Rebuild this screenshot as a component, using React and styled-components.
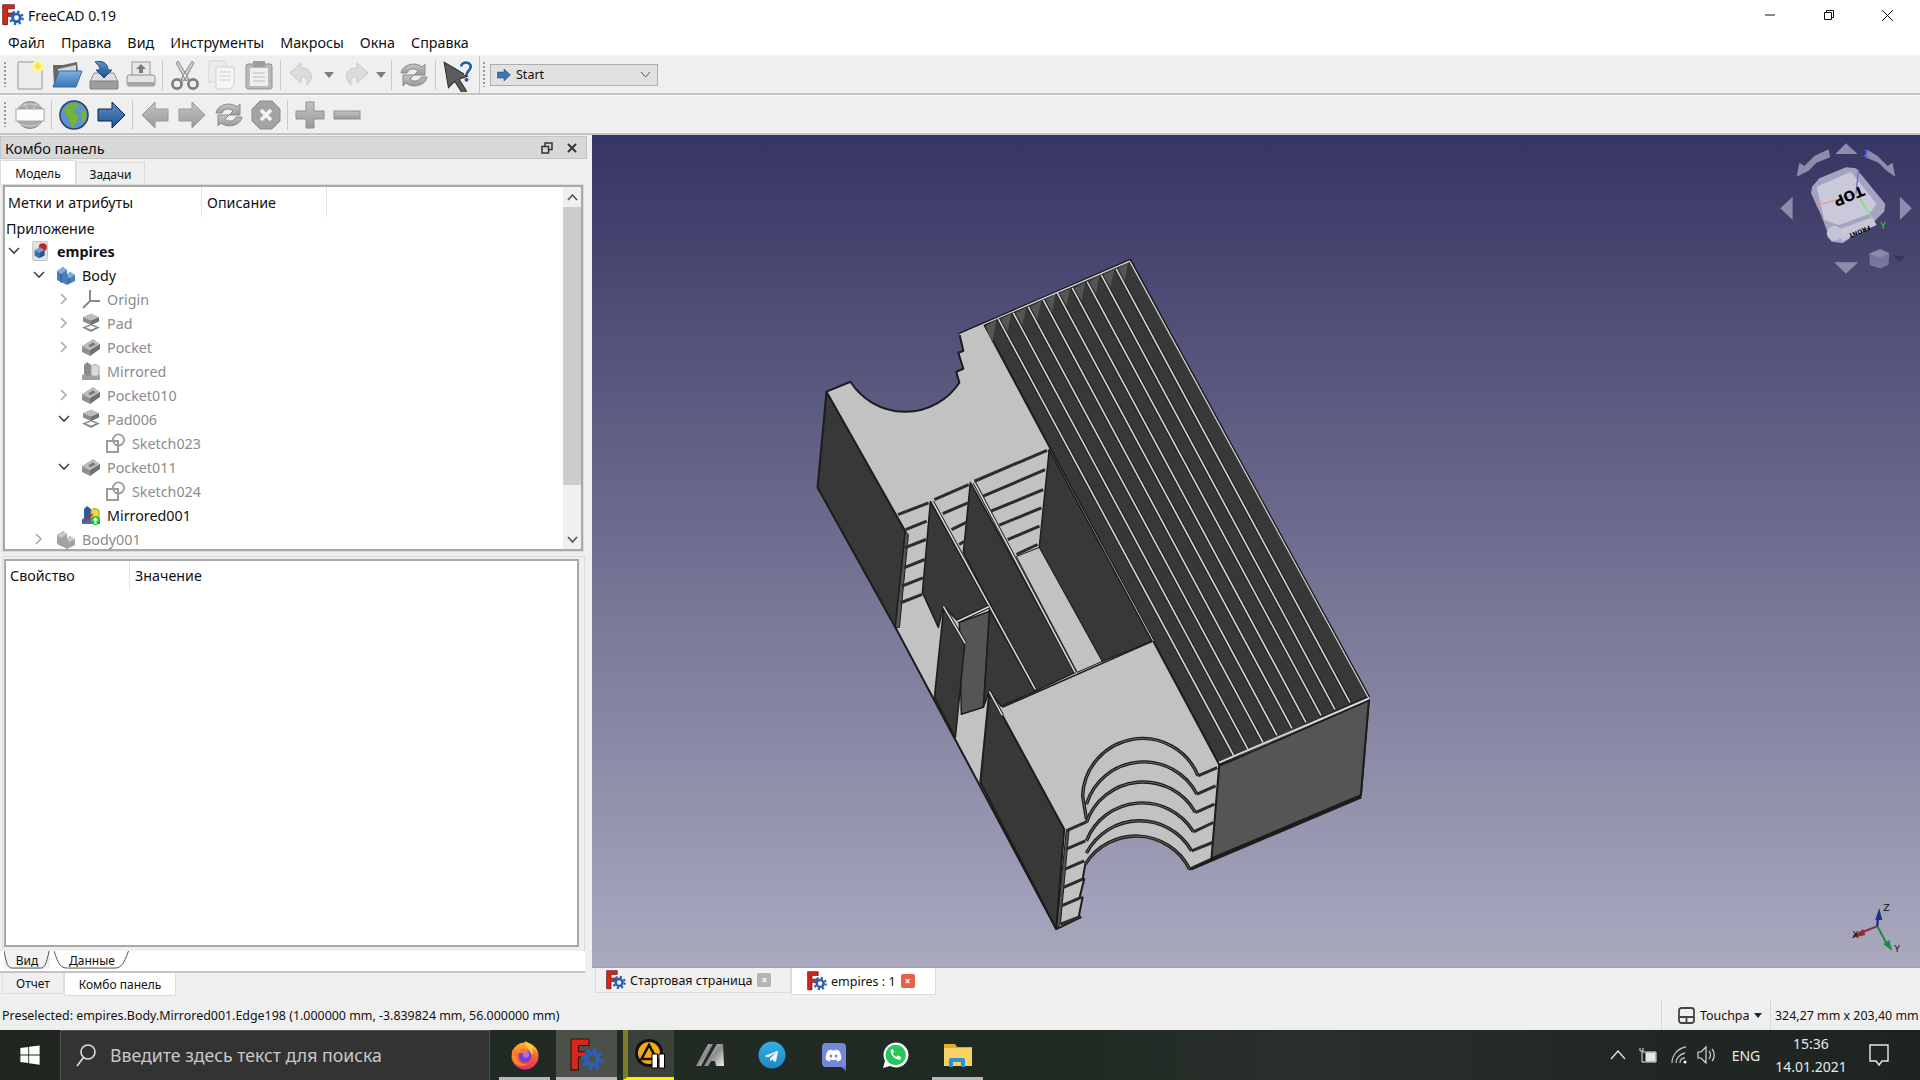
import React from 'react';
import styled, { createGlobalStyle } from 'styled-components';
import { FaWindows, FaDiscord, FaTelegramPlane } from 'react-icons/fa';

const FONT = '"Noto Sans", "Open Sans", sans-serif';

const Global = createGlobalStyle`
  html, body { margin: 0; padding: 0; background: #efefef; overflow: hidden; }
  * { box-sizing: border-box; }
`;

const Page = styled.div`
  width: 1920px;
  height: 1080px;
  display: flex;
  flex-direction: column;
  font-family: ${FONT};
  color: #111;
  background: #efefef;
`;

// title + menu
const TitleBar = styled.div`
  height: 30px;
  background: #fff;
  display: flex;
  align-items: center;
  padding-left: 2px;
  font-size: 14px;
`;
const TitleText = styled.span`
  margin-left: 4px;
`;
const WinButtons = styled.div`
  margin-left: auto;
  display: flex;
  padding-right: 3px;
`;
const WinButton = styled.div`
  width: 59px;
  height: 30px;
  display: flex;
  align-items: center;
  justify-content: center;
`;
const MenuBar = styled.div`
  height: 25px;
  background: #fff;
  display: flex;
  align-items: center;
  gap: 16px;
  padding-left: 8px;
  font-size: 14.3px;
`;

// toolbars
const Toolbar = styled.div`
  height: 40px;
  display: flex;
  align-items: center;
  padding-left: 11px;
  position: relative;
  background: #efefef;
  border-top: 1px solid #f8f8f8;
  border-bottom: 2px solid #c4c4c4;
`;
const Grip = styled.div`
  position: absolute;
  left: ${p => p.$left}px;
  top: 6px;
  bottom: 6px;
  width: 2px;
  background: repeating-linear-gradient(to bottom, #9a9a9a 0 2px, transparent 2px 4px);
`;
const ToolbarEdge = styled.div`
  position: absolute;
  left: 479px;
  top: 0;
  bottom: 0;
  width: 1px;
  background: #c4c4c4;
`;
const ToolButton = styled.div`
  width: ${p => p.$w || 37}px;
  height: 36px;
  display: flex;
  align-items: center;
  justify-content: center;
  flex: none;
`;
const ToolSep = styled.div`
  width: 1px;
  height: 30px;
  margin: 0 3px;
  background: #c9c9c9;
  flex: none;
`;
const Workbench = styled.div`
  width: 168px;
  height: 22px;
  margin-left: 14px;
  background: #e1e1e1;
  border: 1px solid #adadad;
  display: flex;
  align-items: center;
  font-size: 12.5px;
  padding: 0 6px 0 5px;
  gap: 4px;
`;
const ComboArrow = styled.svg`
  margin-left: auto;
`;

// main area
const Main = styled.div`
  height: 865px;
  display: flex;
`;
const LeftColumn = styled.div`
  width: 592px;
  flex: none;
  display: flex;
  flex-direction: column;
`;
const DockTitle = styled.div`
  height: 23px;
  width: 587px;
  margin-top: 1px;
  background: #d8d8d8;
  border: 1px solid #c4c4c4;
  display: flex;
  align-items: center;
  padding: 0 8px 0 4px;
  font-size: 14.5px;
`;
const DockButtons = styled.div`
  margin-left: auto;
  display: flex;
  gap: 13px;
  align-items: center;
`;
const TabRow = styled.div`
  display: flex;
  align-items: ${p => (p.$top ? 'flex-start' : 'flex-end')};
  height: 26px;
  padding-left: ${p => p.$left || 0}px;
`;
const Tab = styled.div`
  height: ${p => p.$h}px;
  width: ${p => p.$w}px;
  display: flex;
  align-items: center;
  justify-content: center;
  font-size: 12px;
  background: ${p => (p.$active ? '#fff' : '#f0f0f0')};
  border: 1px solid #dcdcdc;
  border-bottom: ${p => (p.$flat ? 'none' : '1px solid #dcdcdc')};
  border-top: ${p => (p.$flat ? '1px solid #dcdcdc' : 'none')};
`;
const TreeBox = styled.div`
  width: 580px;
  height: 366px;
  margin-left: 3px;
  border: 2px solid #a8a8a8;
  background: #fff;
  display: flex;
  outline: 1px solid #dcdcdc;
`;
const TreeList = styled.div`
  flex: 1;
  overflow: hidden;
  font-size: 14.3px;
  margin-left: -1px;
`;
const HeaderRow = styled.div`
  height: ${p => p.$h}px;
  display: flex;
  font-size: 14.3px;
`;
const HeaderCell = styled.div`
  width: ${p => p.$w}px;
  height: 100%;
  padding-left: ${p => p.$pad}px;
  display: flex;
  align-items: center;
  border-right: ${p => (p.$last ? 'none' : '1px solid #e4e4e4')};
`;
const TreeRow = styled.div`
  height: 24px;
  display: flex;
  align-items: center;
  padding-left: ${p => p.$depth * 25}px;
  color: ${p => (p.$muted ? '#8c8c8c' : '#111')};
  font-weight: ${p => (p.$bold ? 700 : 400)};
`;
const RootRow = styled.div`
  height: 22px;
  display: flex;
  align-items: center;
  padding-left: 2px;
`;
const Chevron = styled.svg`
  width: 20px;
  height: 20px;
  flex: none;
`;
const RowIcon = styled.svg`
  width: 20px;
  height: 20px;
  flex: none;
  margin: 0 6px 0 7px;
`;
const Scrollbar = styled.div`
  width: 18px;
  flex: none;
  background: #f0f0f0;
  display: flex;
  flex-direction: column;
`;
const ScrollEnd = styled.div`
  height: 20px;
  display: flex;
  align-items: center;
  justify-content: center;
  flex: none;
`;
const ScrollTrack = styled.div`
  flex: 1;
`;
const ScrollThumb = styled.div`
  height: 278px;
  background: #cdcdcd;
  flex: none;
`;
const PropsFrame = styled.div`
  width: 583px;
  height: 395px;
  margin: 5px 0 0 2px;
  padding: 2px 2px;
  border: 1px solid #dcdcdc;
  border-bottom: none;
`;
const PropsBox = styled.div`
  height: 388px;
  width: 575px;
  background: #fff;
  border: 2px solid #a8a8a8;
  margin-left: -1px;
`;
const DataTabs = styled.div`
  width: 585px;
  height: 22px;
  background: #fff;
  border-bottom: 2px solid #c4c4c4;
  display: flex;
  padding-left: 4px;
  font-size: 12px;
`;
const SlantTab = styled.div`
  position: relative;
  height: 18px;
  width: ${p => p.$w}px;
  margin-right: 4px;
  display: flex;
  align-items: center;
  justify-content: center;
  background: ${p => (p.$active ? '#fff' : '#f2f2f2')};
`;
const SlantOutline = styled.svg`
  position: absolute;
  inset: 0;
  width: 100%;
  height: 100%;
`;
const RightColumn = styled.div`
  flex: 1;
  display: flex;
  flex-direction: column;
`;
const Viewport = styled.div`
  height: 833px;
  border-bottom: 1px solid #a5a5a5;
  background: linear-gradient(to bottom, #363563 0%, #a9a9bf 100%);
`;
const Scene = styled.svg`
  width: 100%;
  height: 100%;
  display: block;
`;
const DocTabs = styled.div`
  display: flex;
  padding-left: 3px;
  font-size: 12.5px;
`;
const DocTab = styled.div`
  height: ${p => (p.$active ? 27 : 25)}px;
  width: ${p => p.$w}px;
  display: flex;
  align-items: center;
  gap: 4px;
  padding-left: ${p => p.$pad}px;
  background: ${p => (p.$active ? '#fff' : '#f0f0f0')};
  border: 1px solid #dcdcdc;
  border-top: none;
`;
const CloseBadge = styled.span`
  width: 14px;
  height: 14px;
  margin-left: 1px;
  border-radius: 2px;
  background: ${p => (p.$active ? '#e8604a' : '#b4b4b4')};
  color: #fff;
  font-size: 10px;
  font-weight: 700;
  display: flex;
  align-items: center;
  justify-content: center;
  line-height: 1;
`;

// status
const StatusBar = styled.div`
  height: 30px;
  display: flex;
  align-items: center;
  padding-left: 2px;
  font-size: 12.43px;
`;
const StatusRight = styled.div`
  margin-left: auto;
  display: flex;
  align-items: center;
  height: 30px;
`;
const StatusCell = styled.div`
  width: ${p => p.$w}px;
  height: 100%;
  display: flex;
  align-items: center;
  padding-left: ${p => p.$pad}px;
  gap: 5px;
  border-left: 1px solid #d8d8d8;
  white-space: nowrap;
`;

// windows taskbar
const Taskbar = styled.div`
  height: 50px;
  background: linear-gradient(90deg, #20261f 0%, #222b23 22%, #1f2a22 55%, #2a2f2c 68%, #212823 85%, #1e2421 100%);
  display: flex;
  align-items: center;
  color: #e8e8e8;
`;
const StartButton = styled.div`
  width: 60px;
  height: 50px;
  display: flex;
  align-items: center;
  justify-content: center;
  color: #fff;
  font-size: 22px;
`;
const SearchBox = styled.div`
  width: 430px;
  height: 50px;
  background: #333;
  border: 1px solid #555;
  border-bottom: none;
  display: flex;
  align-items: center;
  gap: 13px;
  padding: 0 0 2px 14px;
  color: #c8c8c8;
  font-size: 17.7px;
  margin-right: 4px;
`;
const TaskIcon = styled.div`
  width: ${p => p.$w || 51}px;
  height: 50px;
  margin-left: ${p => p.$ml || 0}px;
  display: flex;
  align-items: center;
  justify-content: center;
  background: ${p => p.$bg || 'transparent'};
  border-bottom: 3px solid ${p => p.$line || 'transparent'};
  border-left: ${p => (p.$edge ? `5px solid ${p.$edge}` : 'none')};
  padding-top: 3px;
  flex: none;
`;
const Tray = styled.div`
  margin-left: auto;
  display: flex;
  align-items: center;
  height: 50px;
  font-size: 14px;
  padding-right: 18px;
`;
const TrayItem = styled.div`
  width: ${p => p.$w}px;
  display: flex;
  justify-content: center;
  align-items: center;
  padding-left: ${p => p.$pad || 0}px;
`;
const Clock = styled.div`
  width: 90px;
  text-align: center;
  line-height: 23px;
  font-size: 14px;
`;
const HiddenDefs = styled.svg`
  position: absolute;
  width: 0;
  height: 0;
`;

// shared gradients for the toolbar and taskbar pictures
const Gradients = () => (
  <HiddenDefs>
    <defs>
      <linearGradient id="gGray" x1="0" y1="0" x2="0" y2="1">
        <stop offset="0" stopColor="#c4c4c4" />
        <stop offset="1" stopColor="#999" />
      </linearGradient>
      <linearGradient id="gBlue" x1="0" y1="0" x2="0" y2="1">
        <stop offset="0" stopColor="#5b93cf" />
        <stop offset="1" stopColor="#1f4f88" />
      </linearGradient>
      <linearGradient id="gFolder" x1="0" y1="0" x2="0" y2="1">
        <stop offset="0" stopColor="#7fb0e2" />
        <stop offset="1" stopColor="#3b74b6" />
      </linearGradient>
      <linearGradient id="gFox" x1="0" y1="0" x2="0" y2="1">
        <stop offset="0" stopColor="#ffb52e" />
        <stop offset="0.55" stopColor="#f5602f" />
        <stop offset="1" stopColor="#e02f72" />
      </linearGradient>
      <linearGradient id="gMetal" x1="0" y1="0" x2="1" y2="1">
        <stop offset="0" stopColor="#e8e8e8" />
        <stop offset="0.5" stopColor="#8a8a8a" />
        <stop offset="1" stopColor="#f2f2f2" />
      </linearGradient>
      <linearGradient id="gTele" x1="0" y1="0" x2="0" y2="1">
        <stop offset="0" stopColor="#37aee2" />
        <stop offset="1" stopColor="#1e88c7" />
      </linearGradient>
    </defs>
  </HiddenDefs>
);

const FreeCadLogo = ({ size = 20 }) => (
  <svg width={size} height={size} viewBox="0 0 32 32">
    <path d="M1 1h17v6H8v6h8v5H8v12H1z" fill="#d8261c" stroke="#3d0c0a" strokeWidth="1" />
    <circle cx="21" cy="20" r="5.5" fill="none" stroke="#2c5fb4" strokeWidth="4" />
    <circle cx="21" cy="20" r="9" fill="none" stroke="#2c5fb4" strokeWidth="3.4" strokeDasharray="3.5 3.57" />
  </svg>
);

// toolbar pictures, all in a 32x32 box
const Tool = ({ children, size = 32 }) => (
  <svg width={size} height={size} viewBox="0 0 32 32">{children}</svg>
);

const refreshIcon = (
  <Tool>
    <path d="M3 14C4 6 17 2 24 8l3-3v11H16l4-4c-3-3-9-3-11 2z" fill="url(#gGray)" stroke="#8a8a8a" />
    <path d="M29 18c-1 8-14 12-21 6l-3 3V16h11l-4 4c3 3 9 3 11-2z" fill="url(#gGray)" stroke="#8a8a8a" />
  </Tool>
);

const toolIcons = {
  newDoc: (
    <Tool>
      <rect x="4" y="3" width="24" height="27" rx="1" fill="#ececec" stroke="#b4b4b4" strokeWidth="1.5" />
      <circle cx="24" cy="7" r="6" fill="#fbf6a0" />
      <circle cx="24" cy="7" r="3" fill="#f7e93f" />
    </Tool>
  ),
  open: (
    <Tool>
      <path d="M3 26 2 6l10 0 14-3 1 9H9z" fill="#666" />
      <path d="M7 10l18-4v6H7z" fill="#d6d6d6" />
      <path d="M2 28 8 12h23l-6 16z" fill="url(#gFolder)" stroke="#3a6aa4" />
    </Tool>
  ),
  save: (
    <Tool>
      <path d="M6 14h20l4 9H2z" fill="#dedede" stroke="#8f8f8f" />
      <rect x="2" y="22" width="28" height="8" rx="1" fill="#9d9d9d" stroke="#7f7f7f" />
      <path d="M7 3c7-2 13 1 13 8h4l-8 8-8-8h4c0-3-2-6-5-8z" fill="url(#gBlue)" stroke="#224e80" />
    </Tool>
  ),
  saveAs: (
    <Tool>
      <rect x="7" y="3" width="18" height="14" fill="#e8e8e8" stroke="#9a9a9a" />
      <path d="M16 5l5 5h-3v4h-4v-4h-3z" fill="#7d7d7d" />
      <rect x="2" y="16" width="28" height="11" rx="2" fill="#e4e4e4" stroke="#8f8f8f" />
      <rect x="3" y="23" width="26" height="4" fill="#a5a5a5" />
    </Tool>
  ),
  cut: (
    <Tool>
      <path d="M9 2l11 18-3 2L7 4zM23 2 12 20l3 2L25 4z" fill="#cfcfcf" stroke="#8a8a8a" />
      <circle cx="8" cy="25" r="4.6" fill="none" stroke="#808080" strokeWidth="2.8" />
      <circle cx="24" cy="25" r="4.6" fill="none" stroke="#808080" strokeWidth="2.8" />
    </Tool>
  ),
  copy: (
    <Tool>
      <rect x="3" y="2" width="17" height="21" fill="#ececec" stroke="#d6d6d6" />
      <path d="M10 8h18v18l-4 4H10z" fill="#f6f6f6" stroke="#cfcfcf" />
      <path d="M13 13h12M13 17h12M13 21h12" stroke="#cdcdcd" />
    </Tool>
  ),
  paste: (
    <Tool>
      <rect x="3" y="5" width="26" height="25" rx="2" fill="#b9b9b9" stroke="#929292" />
      <rect x="7" y="9" width="18" height="18" fill="#efefef" />
      <path d="M10 2h12v6H10z" fill="#9d9d9d" />
      <path d="M10 14h12M10 18h12M10 22h12" stroke="#bdbdbd" />
    </Tool>
  ),
  undo: (
    <Tool>
      <path d="M14 4 3 14l11 10v-6c5-1 7 2 6 8 7-6 6-17-6-17z" fill="#dcdcdc" stroke="#c6c6c6" />
    </Tool>
  ),
  redo: (
    <Tool>
      <path d="M18 4l11 10-11 10v-6c-5-1-7 2-6 8-7-6-6-17 6-17z" fill="#dcdcdc" stroke="#c6c6c6" />
    </Tool>
  ),
  refresh: refreshIcon,
  whatsThis: (
    <Tool size={34}>
      <path d="M3 4 25 17l-8 3 7 11-4 2-7-11-6 6z" fill="#5c5c5c" stroke="#2d2d2d" />
      <path d="M19 8c0-5 9-5 9 0 0 4-4 4-4 8" fill="none" stroke="#fff" strokeWidth="4.4" />
      <path d="M19 8c0-5 9-5 9 0 0 4-4 4-4 8" fill="none" stroke="#2a5f9e" strokeWidth="2.6" />
      <circle cx="24" cy="20.5" r="1.9" fill="#2a5f9e" />
    </Tool>
  ),
  stopPage: (
    <Tool>
      <circle cx="16" cy="16" r="13.5" fill="#a9a9a9" stroke="#8a8a8a" />
      <path d="M4 8c7-4 17-4 24 0M10 4l3 6M22 4l-3 6M4 24c7 4 17 4 24 0" stroke="#d4d4d4" fill="none" />
      <rect x="2" y="10" width="28" height="12" fill="#fcfcfc" stroke="#a8a8a8" />
    </Tool>
  ),
  globe: (
    <Tool>
      <circle cx="16" cy="16" r="14" fill="#5d94d0" stroke="#2c3f63" strokeWidth="1.6" />
      <path d="M6 11c3-6 10-8 15-6l-2 4-4 1 1 4 5 2-2 6-4 7c-3-1-3-7-4-10-3-1-4-4-5-8z" fill="#74b52f" />
      <path d="M23 11l5 1c1 5 0 9-3 12l-2-7z" fill="#74b52f" />
    </Tool>
  ),
  blueArrow: (
    <Tool>
      <path d="M3 10h14V3l13 13-13 13v-7H3z" fill="url(#gBlue)" stroke="#12253e" />
    </Tool>
  ),
  backGray: (
    <Tool>
      <path d="M29 10H16V3L3 16l13 13v-7h13z" fill="url(#gGray)" stroke="#9a9a9a" />
    </Tool>
  ),
  forwardGray: (
    <Tool>
      <path d="M3 10h13V3l13 13-13 13v-7H3z" fill="url(#gGray)" stroke="#9a9a9a" />
    </Tool>
  ),
  stopGray: (
    <Tool>
      <path d="M10 2h12l8 8v12l-8 8H10l-8-8V10z" fill="#a3a3a3" stroke="#8d8d8d" />
      <path d="M11 11l10 10M21 11 11 21" stroke="#f4f4f4" strokeWidth="3.6" />
    </Tool>
  ),
  plus: (
    <Tool>
      <path d="M12 3h8v9h10v8H20v9h-8v-9H2v-8h10z" fill="url(#gGray)" stroke="#8f8f8f" />
    </Tool>
  ),
  minus: (
    <Tool>
      <rect x="3" y="12" width="26" height="8" fill="url(#gGray)" stroke="#8f8f8f" />
    </Tool>
  ),
};

const DropArrow = () => (
  <svg width="10" height="6" viewBox="0 0 10 6"><path d="M0 0h10L5 6z" fill="#7d7d7d" /></svg>
);

const ChevronIcon = ({ open, muted }) => (
  <Chevron viewBox="0 0 20 20">
    <path
      d={open ? 'M5 7l5 5 5-5' : 'M7 5l5 5-5 5'}
      fill="none"
      stroke={muted ? '#a8a8a8' : '#444'}
      strokeWidth="1.6"
    />
  </Chevron>
);

const padShape = (
  <>
    <path d="M1 14.5 10 11l9 3.5L10 19z" fill="#8a8a8a" />
    <path d="M5 14.5 10 12.5l5 2-5 2z" fill="#fff" />
    <path d="M2 4l8-3.5L18 4l-8 3.5z" fill="#bdbdbd" />
    <path d="M2 4l8 3.5V12L2 8.5z" fill="#8a8a8a" />
    <path d="M10 7.5 18 4v4.5L10 12z" fill="#6f6f6f" />
  </>
);

const pocketShape = (
  <>
    <path d="M1 9 12 2l7 5-10 6z" fill="#bcbcbc" />
    <path d="M7 8.5 12 5.5l2.6 1.8-5 3z" fill="#777" />
    <path d="M1 9l8 4v6l-8-4z" fill="#8f8f8f" />
    <path d="M9 13l10-6v5l-10 7z" fill="#707070" />
  </>
);

const treeIcon = {
  doc: (
    <RowIcon viewBox="0 0 20 22">
      <rect x="1" y="0.5" width="16" height="21" rx="1" fill="#e2e2e2" stroke="#bdbdbd" />
      <circle cx="12" cy="7" r="4.4" fill="#d11f1f" />
      <path d="M3 10l6-3 5 3-6 3z" fill="#6f9ed6" />
      <path d="M3 10l5 3v6l-5-3z" fill="#3d6cab" />
      <path d="M8 13l6-3v6l-6 3z" fill="#28548e" />
    </RowIcon>
  ),
  body: (
    <RowIcon viewBox="0 0 20 20">
      <path d="M1 6l6-4 4 3v4l3-2 5 3v6l-8 4-10-5z" fill="#4a7dbb" />
      <path d="M1 6l6-4 4 3-6 4zM11 9l3-2 5 3-6 3.4z" fill="#86abda" />
      <path d="M5 9v9M13 13.5V18" stroke="#2b5286" />
    </RowIcon>
  ),
  bodyGray: (
    <RowIcon viewBox="0 0 20 20">
      <path d="M1 6l6-4 4 3v4l3-2 5 3v6l-8 4-10-5z" fill="#a2a2a2" />
      <path d="M1 6l6-4 4 3-6 4zM11 9l3-2 5 3-6 3.4z" fill="#c8c8c8" />
    </RowIcon>
  ),
  origin: (
    <RowIcon viewBox="0 0 20 20">
      <path d="M9 1v11M9 12h10M9 12l-7 7" fill="none" stroke="#8a8a8a" strokeWidth="2" />
    </RowIcon>
  ),
  pad: <RowIcon viewBox="0 0 20 20">{padShape}</RowIcon>,
  pocket: <RowIcon viewBox="0 0 20 20">{pocketShape}</RowIcon>,
  mirrored: (
    <RowIcon viewBox="0 0 20 20">
      <path d="M1 14l8-3 10 3v5H1z" fill="#a0a0a0" />
      <path d="M3 4l3-3 4 3v9l-3 3-4-3z" fill="#8a8a8a" />
      <path d="M10 6c0-3 8-3 8 0v7c0 3-8 3-8 0z" fill="#dadada" stroke="#a2a2a2" />
    </RowIcon>
  ),
  mirroredActive: (
    <RowIcon viewBox="0 0 20 20">
      <path d="M1 14l8-3 10 3v5H1z" fill="#3f72b0" />
      <path d="M3 4l3-3 4 3v9l-3 3-4-3z" fill="#2d5c99" />
      <path d="M10 6c0-3 8-3 8 0v7c0 3-8 3-8 0z" fill="#ecd944" stroke="#a7942b" />
      <path d="M2 17l10-8" stroke="#cf2121" strokeWidth="1.6" />
      <circle cx="14.5" cy="15.5" r="4.5" fill="#17c424" />
      <path d="M14.5 12l3 3.4h-2V19h-2v-3.6h-2z" fill="#fff" />
    </RowIcon>
  ),
  sketch: (
    <RowIcon viewBox="0 0 20 20">
      <rect x="1" y="8" width="11" height="11" fill="none" stroke="#979797" strokeWidth="1.9" />
      <circle cx="12.5" cy="7" r="5.6" fill="none" stroke="#979797" strokeWidth="1.7" />
    </RowIcon>
  ),
};

const treeRows = [
  { label: 'empires', depth: 0, icon: 'doc', open: true, bold: true },
  { label: 'Body', depth: 1, icon: 'body', open: true },
  { label: 'Origin', depth: 2, icon: 'origin', closed: true, muted: true },
  { label: 'Pad', depth: 2, icon: 'pad', closed: true, muted: true },
  { label: 'Pocket', depth: 2, icon: 'pocket', closed: true, muted: true },
  { label: 'Mirrored', depth: 2, icon: 'mirrored', muted: true },
  { label: 'Pocket010', depth: 2, icon: 'pocket', closed: true, muted: true },
  { label: 'Pad006', depth: 2, icon: 'pad', open: true, muted: true },
  { label: 'Sketch023', depth: 3, icon: 'sketch', muted: true },
  { label: 'Pocket011', depth: 2, icon: 'pocket', open: true, muted: true },
  { label: 'Sketch024', depth: 3, icon: 'sketch', muted: true },
  { label: 'Mirrored001', depth: 2, icon: 'mirroredActive' },
  { label: 'Body001', depth: 1, icon: 'bodyGray', closed: true, muted: true },
];

// the zoomed crops were read off at these scales, convert to page coordinates
const a = (x, y) => [800 + x / 2.613, 240 + y / 3];
const b = (x, y) => [800 + x / 2.613, 500 + y / 3];
const n = (x, y) => [1760 + x / 3, 130 + y / 3];
const str = list => list.map(p => p.map(v => v.toFixed(1)).join(',')).join(' ');
const seg = (p, q) => ({ x1: p[0], y1: p[1], x2: q[0], y2: q[1] });

const EDGE = '#1c1c1c';
const LIGHT = '#c2c2c2';
const DARK = '#383838';
const MID = '#555';

const ribTops = [[984, 325], [998, 319], [1013, 313], [1028, 307], [1043, 300], [1057, 293], [1072, 288], [1087, 282], [1101, 275], [1116, 269], [1130, 260]];
const ribEnds = [[1219, 765], [1234, 757], [1248, 750], [1263, 743], [1277, 736], [1292, 729], [1306, 723], [1321, 716], [1335, 710], [1350, 703], [1369, 697]];

const stairLines = [
  [[255, 825], [335, 790]], [[275, 870], [330, 845]], [[272, 925], [328, 900]], [[270, 985], [325, 960]],
  [[265, 1040], [320, 1015]], [[262, 1090], [318, 1065]],
  [[350, 780], [440, 735]], [[372, 822], [438, 790]], [[395, 870], [435, 848]], [[415, 915], [428, 906]],
  [[455, 725], [645, 632]], [[478, 770], [640, 690]], [[498, 815], [635, 750]], [[520, 857], [630, 805]],
  [[542, 900], [625, 860]], [[565, 945], [620, 915]],
];

const frontSteps = [
  [[1040, 830], [1090, 805]], [[1037, 885], [1086, 860]], [[1033, 940], [1083, 915]], [[1028, 998], [1080, 970]],
  [[1023, 1055], [1078, 1030]], [[1018, 1110], [1075, 1080]],
  [[695, 995], [748, 968]], [[695, 1050], [745, 1025]], [[692, 1110], [742, 1085]], [[688, 1165], [738, 1140]],
  [[684, 1220], [734, 1195]], [[680, 1275], [733, 1252]],
];

// right end, left end of each stepped arc
const arcs = [
  [[1040, 830], [738, 890], [748, 960]],
  [[1037, 885], [748, 915]],
  [[1033, 940], [748, 970]],
  [[1028, 998], [748, 1025]],
  [[1023, 1055], [748, 1062]],
  [[1018, 1110], [745, 1095]],
];

const arcPath = ([r, e, tail]) =>
  `M${b(...r)} A60 60 0 0 0 ${b(...e)}${tail ? ` L${b(...tail)}` : ''}`;

const CadModel = () => (
  <g strokeLinejoin="round">
    {/* light top faces */}
    <path
      d={`M826,392 L850,382 A65 65 0 0 0 959,383
        L${str([[956, 372], [963, 369], [958, 353], [963, 351], [959, 334], [1130, 260], [1369, 701], [1361, 796], b(1018, 1110)])}
        A60 60 0 0 0 ${b(745, 1095)}
        L${str([b(738, 1140), b(742, 1140), b(730, 1195), b(738, 1195), b(728, 1252), b(733, 1255), [1056, 930], [895, 628]])} Z`}
      fill={LIGHT}
      stroke={EDGE}
      strokeWidth="2"
    />
    {/* left outer wall */}
    <polygon points="826,392 817,488 895,628 905,532" fill={DARK} stroke={EDGE} strokeWidth="2" />
    <polygon points="905,532 895,628 899,628 908,535" fill={MID} stroke={EDGE} strokeWidth="1" />

    {/* channels on the right */}
    <polygon points="984,325 1130,260 1369,697 1219,765" fill={DARK} stroke={EDGE} strokeWidth="2" />
    {ribTops.slice(0, 10).map((p, i) => {
      const t = ribTops[i + 1];
      return <polygon key={i} points={`${p[0] + 1},${p[1] + 1} ${t[0] - 2},${t[1] + 1} ${p[0] + 8},${p[1] + 18}`} fill={MID} />;
    })}
    {ribTops.slice(1, 10).map((p, i) => (
      <g key={i}>
        <line {...seg(p, ribEnds[i + 1])} stroke={EDGE} strokeWidth="3.6" />
        <line {...seg(p, ribEnds[i + 1])} stroke="#d6d6d6" strokeWidth="1.6" />
      </g>
    ))}
    <line {...seg([1130, 262], [1369, 699])} stroke="#d6d6d6" strokeWidth="1.2" />
    <line {...seg([959, 335], [1130, 261])} stroke="#d6d6d6" strokeWidth="1.2" />
    <line {...seg([1049, 450], [1153, 642])} stroke={EDGE} strokeWidth="3.5" />
    <line {...seg([1049, 450], [1153, 642])} stroke="#d6d6d6" strokeWidth="1.5" />

    {/* pocket walls */}
    <polygon points={str([[930, 502], [989, 608], [959, 623], [943, 607], [938, 628], [922, 593]])} fill={DARK} stroke={EDGE} strokeWidth="1.5" />
    <polygon points={str([[989, 610], [1035, 692], [1001, 707], [989, 692], [983, 708]])} fill={DARK} stroke={EDGE} strokeWidth="1.5" />
    <polygon points={str([[959, 623], [989, 612], [983, 708], [961, 715]])} fill={MID} stroke={EDGE} strokeWidth="1.5" />
    <polygon points={str([[970, 483], [1075, 673], [1035, 692], [963, 553]])} fill={DARK} stroke={EDGE} strokeWidth="1.5" />
    <polygon points={str([[1049, 450], [1152, 642], [1102, 662], [1039, 548]])} fill={DARK} stroke={EDGE} strokeWidth="1.5" />
    <polygon points={str([[1016, 557], [1039, 548], [1102, 662], [1077, 673]])} fill={LIGHT} stroke={EDGE} strokeWidth="1" />
    <polygon points={str([[943.5, 607], [964.6, 643], [955, 738], [934, 698]])} fill={DARK} stroke={EDGE} strokeWidth="1.5" />
    <polygon points={str([[989, 692], [1064, 830], [1056, 930], [980, 783]])} fill={DARK} stroke={EDGE} strokeWidth="2" />

    {/* light lips beside the walls */}
    {[[[932, 502], [1035, 690]], [[974, 483], [1075, 673]], [[943, 607], [965, 644]], [[989, 692], [1002, 716]], [[957, 622], [989, 607]]].map((l, i) => (
      <g key={i}>
        <line {...seg(l[0], l[1])} stroke={EDGE} strokeWidth="3.5" />
        <line {...seg(l[0], l[1])} stroke="#d8d8d8" strokeWidth="1.6" />
      </g>
    ))}
    <line {...seg([1002, 708], [1152, 642])} stroke={EDGE} strokeWidth="1.6" />

    {/* stairs inside the pockets */}
    {stairLines.map((l, i) => (
      <line key={i} {...seg(a(...l[0]), a(...l[1]))} stroke="#2c2c2c" strokeWidth="3" />
    ))}

    {/* front end */}
    <polygon points={str([b(695, 995), b(670, 1290), b(680, 1275), b(702, 995)])} fill={MID} stroke={EDGE} strokeWidth="1" />
    {frontSteps.map((l, i) => (
      <line key={i} {...seg(b(...l[0]), b(...l[1]))} stroke="#2c2c2c" strokeWidth="3" />
    ))}
    {arcs.map((arc, i) => (
      <g key={i} fill="none">
        <path d={arcPath(arc)} stroke="#1c1c1c" strokeWidth="3.4" />
        <path d={arcPath(arc)} stroke="#6a6a6a" strokeWidth="1" />
      </g>
    ))}
    <polygon points={str([b(1095, 800), [1369, 701], [1361, 796], b(1075, 1078)])} fill={MID} stroke={EDGE} strokeWidth="2" />
    <polygon points={str([[1361, 796], b(1075, 1078), b(1020, 1110), b(1025, 1113), [1362, 799]])} fill={EDGE} />
    <line {...seg(b(1095, 790), [1369, 699])} stroke="#d6d6d6" strokeWidth="2" />
  </g>
);

const NavCube = () => (
  <g>
    <g fill="#8c8cab">
      <polygon points={str([n(260, 40), n(295, 72), n(228, 72)])} />
      <polygon points={str([n(63, 235), n(100, 200), n(100, 270)])} />
      <polygon points={str([n(458, 235), n(422, 200), n(422, 270)])} />
      <polygon points={str([n(260, 432), n(225, 397), n(297, 397)])} />
      <polygon points={str([n(208, 58), n(212, 82), n(172, 98), n(148, 122), n(112, 140), n(120, 98), n(135, 108), n(165, 78)])} />
      <polygon points={str([n(322, 58), n(318, 82), n(358, 98), n(382, 122), n(408, 140), n(400, 98), n(385, 108), n(355, 78)])} />
    </g>
    <polygon points={str([n(158, 170), n(180, 145), n(260, 112), n(290, 115), n(378, 222), n(375, 245), n(345, 275), n(250, 340), n(215, 335), n(185, 255), n(155, 190)])} fill="#a3a3c2" />
    <polygon points={str([n(172, 170), n(275, 125), n(352, 222), n(330, 252), n(238, 285), n(195, 270)])} fill="#c9c9da" />
    <polygon points={str([n(232, 300), n(340, 262), n(352, 285), n(248, 335)])} fill="#c6c6d8" />
    <circle cx={n(225, 0)[0]} cy={n(0, 310)[1]} r="7.5" fill="#c4c4d8" />
    <line {...seg(n(298, 118), n(290, 192))} stroke="#6b6be0" strokeWidth="1.3" />
    <line {...seg(n(180, 225), n(290, 192))} stroke="#e89a9a" strokeWidth="1.3" />
    <line {...seg(n(295, 195), n(338, 265))} stroke="#7fe07f" strokeWidth="1.6" />
    <text x={n(268, 0)[0]} y={n(0, 196)[1]} fontFamily="DejaVu Sans" fontWeight="700" fontSize="14" textAnchor="middle" dominantBaseline="middle" transform={`rotate(157 ${n(268, 196).join(' ')})`}>TOP</text>
    <text x={n(300, 0)[0]} y={n(0, 304)[1]} fontFamily="DejaVu Sans" fontWeight="700" fontSize="6" textAnchor="middle" dominantBaseline="middle" transform={`rotate(157 ${n(300, 304).join(' ')})`}>FRONT</text>
    <text x={n(322, 0)[0]} y={n(0, 80)[1]} fontFamily="DejaVu Sans" fontSize="9" fill="#5a5ae0" textAnchor="middle">Z</text>
    <text x={n(372, 0)[0]} y={n(0, 298)[1]} fontFamily="DejaVu Sans" fontSize="9" fill="#22e022" textAnchor="middle">Y</text>
    <text x={n(180, 0)[0]} y={n(0, 232)[1]} fontFamily="DejaVu Sans" fontSize="8" fill="#e89a9a" textAnchor="middle">X</text>
    <polygon points={str([n(330, 372), n(362, 358), n(390, 370), n(388, 405), n(362, 416), n(332, 406)])} fill="#77779b" />
    <polygon points={str([n(330, 372), n(362, 384), n(390, 370), n(362, 358)])} fill="#8a8aac" />
    <polygon points={str([n(402, 378), n(440, 378), n(421, 397)])} fill="#37375f" />
  </g>
);

const AxisCross = () => (
  <g>
    <line x1="1878" y1="927" x2="1854" y2="937" stroke="#8e2d35" strokeWidth="2" />
    <polygon points="1852,939 1864,930 1866,936" fill="#8e2d35" />
    <line x1="1878" y1="927" x2="1888" y2="946" stroke="#23893a" strokeWidth="2" />
    <polygon points="1893,952 1884,945 1890,941" fill="#23893a" />
    <line x1="1878" y1="927" x2="1879" y2="915" stroke="#232f8c" strokeWidth="2.4" />
    <polygon points="1880,909 1876,921 1883,921" fill="#232f8c" />
    <text x="1884" y="912" fontFamily="DejaVu Sans" fontSize="9.5" fill="#111">Z</text>
    <text x="1895" y="953" fontFamily="DejaVu Sans" fontSize="9.5" fill="#111">Y</text>
    <text x="1853" y="939" fontFamily="DejaVu Sans" fontSize="9.5" fill="#111">X</text>
  </g>
);

const Firefox = () => (
  <svg width="30" height="30" viewBox="0 0 30 30">
    <circle cx="15" cy="16" r="13.5" fill="url(#gFox)" />
    <path d="M15 1c6 3 12 7 14 15-1-4-4-7-7-8 1 3 1 5 0 7-2-5-7-8-7-14z" fill="#ffc93a" />
    <path d="M2 9c1 5 2 6 5 8 0 6 8 9 12 6-6 6-17 2-17-7z" fill="#ff8a2b" />
    <circle cx="15" cy="16" r="6.5" fill="#7a3fc4" />
    <circle cx="16" cy="14.5" r="3.2" fill="#b56be2" />
    <path d="M8 13c3-3 8-2 10-5 1 3-2 5-5 5z" fill="#ff7a24" />
  </svg>
);

const AimpIcon = () => (
  <svg width="32" height="32" viewBox="0 0 32 32">
    <circle cx="14" cy="14" r="12.5" fill="#f3a91c" stroke="#111" strokeWidth="3" />
    <path d="M14 6 6.5 20h15z" fill="none" stroke="#111" strokeWidth="2.6" />
    <path d="M17 15h5.5v14H17zM24 15h5.5v14H24z" fill="#fff" stroke="#000" strokeWidth="1" />
  </svg>
);

const SlashIcon = () => (
  <svg width="30" height="24" viewBox="0 0 30 24">
    <path d="M1 23 13 1h5L6 23z" fill="url(#gMetal)" />
    <path d="M9 23 22 1h6l1 22h-8l-1-5h-4l-3 5z" fill="url(#gMetal)" />
  </svg>
);

const Telegram = () => (
  <svg width="28" height="28" viewBox="0 0 28 28">
    <circle cx="14" cy="14" r="13.5" fill="url(#gTele)" />
    <foreignObject x="5.5" y="6" width="16" height="16">
      <FaTelegramPlane size={15} color="#eef6fb" />
    </foreignObject>
  </svg>
);

const DiscordIcon = styled.div`
  position: relative;
  width: 24px;
  height: 24px;
  border-radius: 4px 4px 0 4px;
  background: #7289da;
  color: #fff;
  display: flex;
  align-items: center;
  justify-content: center;
  font-size: 17px;
  &::after {
    content: '';
    position: absolute;
    right: 0;
    bottom: -4px;
    border-left: 5px solid transparent;
    border-top: 4px solid #5f76c4;
  }
`;

const Whatsapp = () => (
  <svg width="27" height="27" viewBox="0 0 27 27">
    <path d="M1 26l2-7a12.5 12.5 0 1 1 5 5z" fill="#fff" />
    <circle cx="13.7" cy="13" r="10.2" fill="#29c65c" />
    <path d="M9 7.5c-1.6 5 5 11.5 10 10l-.5-3-3-1-1.3 1.5c-2-1-3-2.3-3.7-3.8l1.5-1.2-1-3z" fill="#fff" />
  </svg>
);

const Explorer = () => (
  <svg width="28" height="24" viewBox="0 0 28 24">
    <path d="M0 1h11l2 3h15v19H0z" fill="#e3ac2c" />
    <rect x="0" y="5" width="28" height="18" fill="#f7d266" />
    <path d="M5 24v-7a2 2 0 0 1 2-2h12a2 2 0 0 1 2 2v7h-4v-5H9v5z" fill="#2f8fd0" />
  </svg>
);

const Caret = ({ dir }) => (
  <svg width="11" height="7" viewBox="0 0 11 7">
    <path d={dir === 'up' ? 'M1 6l4.5-5L10 6' : 'M1 1l4.5 5L10 1'} fill="none" stroke="#4d4d4d" strokeWidth="1.5" />
  </svg>
);

const Slant = () => (
  <SlantOutline viewBox="0 0 50 19" preserveAspectRatio="none">
    <path d="M0 0 C3 14 4 18 9 18 H40 C44 18 46 14 49 0" fill="none" stroke="#555" strokeWidth="1" vectorEffect="non-scaling-stroke" />
  </SlantOutline>
);

const App = () => (
  <Page>
    <Global />
    <Gradients />
    <TitleBar>
      <FreeCadLogo size={22} />
      <TitleText>FreeCAD 0.19</TitleText>
      <WinButtons>
        <WinButton>
          <svg width="12" height="12"><path d="M1 6h10" stroke="#111" /></svg>
        </WinButton>
        <WinButton>
          <svg width="12" height="12" fill="none" stroke="#111">
            <path d="M1.5 3.5h7v7h-7zM3.5 3.5v-2h7v7h-2" />
          </svg>
        </WinButton>
        <WinButton>
          <svg width="13" height="13"><path d="M1 1l11 11M12 1 1 12" stroke="#111" /></svg>
        </WinButton>
      </WinButtons>
    </TitleBar>
    <MenuBar>
      {['Файл', 'Правка', 'Вид', 'Инструменты', 'Макросы', 'Окна', 'Справка'].map(m => (
        <span key={m}>{m}</span>
      ))}
    </MenuBar>

    <Toolbar>
      <Grip $left={4} />
      <ToolButton>{toolIcons.newDoc}</ToolButton>
      <ToolButton>{toolIcons.open}</ToolButton>
      <ToolButton>{toolIcons.save}</ToolButton>
      <ToolButton>{toolIcons.saveAs}</ToolButton>
      <ToolSep />
      <ToolButton>{toolIcons.cut}</ToolButton>
      <ToolButton>{toolIcons.copy}</ToolButton>
      <ToolButton>{toolIcons.paste}</ToolButton>
      <ToolSep />
      <ToolButton>{toolIcons.undo}</ToolButton>
      <ToolButton $w={15}><DropArrow /></ToolButton>
      <ToolButton>{toolIcons.redo}</ToolButton>
      <ToolButton $w={15}><DropArrow /></ToolButton>
      <ToolSep />
      <ToolButton>{toolIcons.refresh}</ToolButton>
      <ToolSep />
      <ToolButton>{toolIcons.whatsThis}</ToolButton>
      <ToolbarEdge />
      <Grip $left={483} />
      <Workbench>
        <Tool size={16}><path d="M3 10h13V4l13 12-13 12v-6H3z" fill="#3a76b8" stroke="#1c3a60" /></Tool>
        Start
        <ComboArrow width="11" height="7" viewBox="0 0 11 7">
          <path d="M1 1l4.5 5L10 1" fill="none" stroke="#555" />
        </ComboArrow>
      </Workbench>
    </Toolbar>
    <Toolbar>
      <Grip $left={4} />
      <ToolButton>{toolIcons.stopPage}</ToolButton>
      <ToolSep />
      <ToolButton>{toolIcons.globe}</ToolButton>
      <ToolButton>{toolIcons.blueArrow}</ToolButton>
      <ToolSep />
      <ToolButton>{toolIcons.backGray}</ToolButton>
      <ToolButton>{toolIcons.forwardGray}</ToolButton>
      <ToolButton>{toolIcons.refresh}</ToolButton>
      <ToolButton>{toolIcons.stopGray}</ToolButton>
      <ToolSep />
      <ToolButton>{toolIcons.plus}</ToolButton>
      <ToolButton>{toolIcons.minus}</ToolButton>
    </Toolbar>

    <Main>
      <LeftColumn>
        <DockTitle>
          Комбо панель
          <DockButtons>
            <svg width="12" height="12" fill="none" stroke="#333" strokeWidth="1.5">
              <path d="M1 4.5h6.5v6.5H1zM4 4V1h7v6.5H8" />
            </svg>
            <svg width="12" height="12"><path d="M2 2l8 8M10 2l-8 8" stroke="#333" strokeWidth="2" /></svg>
          </DockButtons>
        </DockTitle>
        <TabRow>
          <Tab $active $flat $w={76} $h={25}>Модель</Tab>
          <Tab $flat $w={69} $h={23}>Задачи</Tab>
        </TabRow>
        <TreeBox>
          <TreeList>
            <HeaderRow $h={30}>
              <HeaderCell $w={198} $pad={4}>Метки и атрибуты</HeaderCell>
              <HeaderCell $w={125} $pad={5}>Описание</HeaderCell>
            </HeaderRow>
            <RootRow>Приложение</RootRow>
            {treeRows.map(r => (
              <TreeRow key={r.label} $depth={r.depth} $muted={r.muted} $bold={r.bold}>
                {r.open || r.closed ? <ChevronIcon open={r.open} muted={r.closed} /> : <Chevron />}
                {treeIcon[r.icon]}
                {r.label}
              </TreeRow>
            ))}
          </TreeList>
          <Scrollbar>
            <ScrollEnd><Caret dir="up" /></ScrollEnd>
            <ScrollThumb />
            <ScrollTrack />
            <ScrollEnd><Caret dir="down" /></ScrollEnd>
          </Scrollbar>
        </TreeBox>
        <PropsFrame>
          <PropsBox>
            <HeaderRow $h={28}>
              <HeaderCell $w={124} $pad={4}>Свойство</HeaderCell>
              <HeaderCell $w={140} $pad={5} $last>Значение</HeaderCell>
            </HeaderRow>
          </PropsBox>
        </PropsFrame>
        <DataTabs>
          <SlantTab $w={46}><Slant />Вид</SlantTab>
          <SlantTab $w={76} $active><Slant />Данные</SlantTab>
        </DataTabs>
        <TabRow $left={2} $top>
          <Tab $w={62} $h={21}>Отчет</Tab>
          <Tab $active $w={112} $h={23}>Комбо панель</Tab>
        </TabRow>
      </LeftColumn>
      <RightColumn>
        <Viewport>
          <Scene viewBox="592 135 1328 833">
            <CadModel />
            <NavCube />
            <AxisCross />
          </Scene>
        </Viewport>
        <DocTabs>
          <DocTab $w={196} $pad={10}>
            <FreeCadLogo size={20} />
            Стартовая страница
            <CloseBadge>×</CloseBadge>
          </DocTab>
          <DocTab $active $w={145} $pad={15}>
            <FreeCadLogo size={20} />
            empires : 1
            <CloseBadge $active>×</CloseBadge>
          </DocTab>
        </DocTabs>
      </RightColumn>
    </Main>

    <StatusBar>
      Preselected: empires.Body.Mirrored001.Edge198 (1.000000 mm, -3.839824 mm, 56.000000 mm)
      <StatusRight>
        <StatusCell $w={109} $pad={16}>
          <svg width="17" height="17" viewBox="0 0 17 17" fill="none" stroke="#444" strokeWidth="1.8">
            <rect x="1" y="1" width="15" height="15" rx="2.5" />
            <path d="M1 10h15M8.5 10v6" />
          </svg>
          Touchpa
          <svg width="8" height="5"><path d="M0 0h8L4 5z" fill="#222" /></svg>
        </StatusCell>
        <StatusCell $w={150} $pad={4}>324,27 mm x 203,40 mm</StatusCell>
      </StatusRight>
    </StatusBar>

    <Taskbar>
      <StartButton><FaWindows /></StartButton>
      <SearchBox>
        <svg width="22" height="24" viewBox="0 0 22 24" fill="none" stroke="#e0e0e0" strokeWidth="1.6">
          <circle cx="13" cy="9" r="7" />
          <path d="M8.5 14.5 2 23" />
        </svg>
        Введите здесь текст для поиска
      </SearchBox>
      <TaskIcon $ml={5} $line="#b8b8b8"><Firefox /></TaskIcon>
      <TaskIcon $ml={6} $w={61} $bg="#4b5148" $line="#b8b8b8"><FreeCadLogo size={34} /></TaskIcon>
      <TaskIcon $ml={6} $edge="#7d7d28" $bg="#3a4138" $line="#ffee00"><AimpIcon /></TaskIcon>
      <TaskIcon $ml={10}><SlashIcon /></TaskIcon>
      <TaskIcon $ml={11}><Telegram /></TaskIcon>
      <TaskIcon $ml={11}><DiscordIcon><FaDiscord /></DiscordIcon></TaskIcon>
      <TaskIcon $ml={11}><Whatsapp /></TaskIcon>
      <TaskIcon $ml={11} $line="#b8b8b8"><Explorer /></TaskIcon>
      <Tray>
        <TrayItem $w={30}>
          <svg width="16" height="10" fill="none" stroke="#e8e8e8" strokeWidth="1.3"><path d="M1 9l7-8 7 8" /></svg>
        </TrayItem>
        <TrayItem $w={30}>
          <svg width="20" height="16" fill="none" stroke="#e8e8e8"><path d="M4 5h14v10H4zM2 1v3h3V1" /><rect x="8" y="6" width="9" height="8" fill="#e8e8e8" /></svg>
        </TrayItem>
        <TrayItem $w={31}>
          <svg width="18" height="20" fill="none" stroke="#bcbcbc" strokeWidth="1.3">
            <path d="M2 18C2 10 8 3 16 2M6 18c0-5 4-9 9-10M10 18c0-3 2-5 5-5" />
            <circle cx="15" cy="17" r="1.5" fill="#fff" stroke="none" />
          </svg>
        </TrayItem>
        <TrayItem $w={26}>
          <svg width="22" height="20" fill="none" stroke="#d8d8d8" strokeWidth="1.2">
            <path d="M2 7h3l5-5v16l-5-5H2zM13 6c2 2 2 6 0 8M16 4c3 3 3 9 0 12" />
          </svg>
        </TrayItem>
        <TrayItem $w={46} $pad={6}>ENG</TrayItem>
        <Clock>15:36<br />14.01.2021</Clock>
        <TrayItem $w={46}>
          <svg width="22" height="24" fill="none" stroke="#e8e8e8" strokeWidth="1.4">
            <path d="M2 2h18v16h-6l-3 4-3-4H2z" />
          </svg>
        </TrayItem>
      </Tray>
    </Taskbar>
  </Page>
);

export default App;
